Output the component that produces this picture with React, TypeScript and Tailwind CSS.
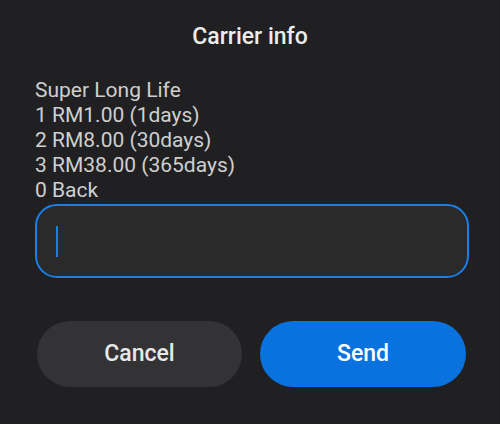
export default function App() {
  return (
    <div className="w-[500px] h-[424px] bg-[#202022] overflow-hidden" style={{ fontFamily: "Roboto, 'Noto Sans', sans-serif" }}>
      <div className="pt-[23px] text-center text-[23px] leading-[28px] font-medium text-[#ececec]">Carrier info</div>
      <div className="mt-[27px] px-[35px] text-[21px] leading-[25px] text-[#cfcfcf]">
        <div>Super Long Life</div>
        <div>1 RM1.00 (1days)</div>
        <div>2 RM8.00 (30days)</div>
        <div>3 RM38.00 (365days)</div>
        <div>0 Back</div>
      </div>
      <div className="ml-[35px] w-[434px] mt-[1px] h-[74px] rounded-[22px] border-2 border-[#1a7fe8] bg-[#2a2a2b] flex items-center pl-[19px]">
        <div className="w-[2px] h-[31px] bg-[#1a7fe8]" />
      </div>
      <div className="mt-[43px] flex gap-[18px] pl-[37px]">
        <div className="w-[205px] h-[66px] shrink-0 rounded-full bg-[#333335] flex items-center justify-center text-[23px] font-medium text-[#e8e8e8]">Cancel</div>
        <div className="w-[206px] h-[66px] shrink-0 rounded-full bg-[#0a72de] flex items-center justify-center text-[23px] font-medium text-white">Send</div>
      </div>
    </div>
  );
}
